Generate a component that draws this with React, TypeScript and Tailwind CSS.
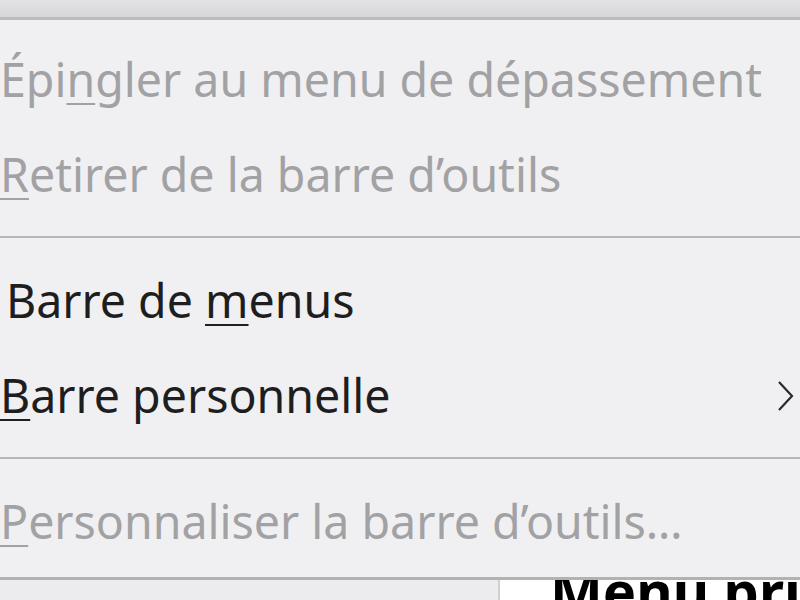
import React from 'react'

type Item = {
  before: string
  key: string
  after: string
  disabled?: boolean
  submenu?: boolean
  indent?: boolean
}

const groups: Item[][] = [
  [
    { before: 'Épi', key: 'n', after: 'gler au menu de dépassement', disabled: true },
    { before: '', key: 'R', after: 'etirer de la barre d’outils', disabled: true },
  ],
  [
    { before: 'Barre de ', key: 'm', after: 'enus', indent: true },
    { before: '', key: 'B', after: 'arre personnelle', submenu: true },
  ],
  [{ before: '', key: 'P', after: 'ersonnaliser la barre d’outils…', disabled: true }],
]

function MenuRow({ item }: { item: Item }) {
  return (
    <div
      className={`flex items-center h-[95px] leading-[95px] whitespace-nowrap ${
        item.disabled ? 'text-[#a2a2a4]' : 'text-[#1e1e20]'
      } ${item.indent ? 'pl-[6px]' : 'pl-0'}`}
    >
      <span className="flex-1">
        {item.before}
        <span className="underline decoration-2 underline-offset-[6px]">{item.key}</span>
        {item.after}
      </span>
      {item.submenu && (
        <svg width="22" height="34" viewBox="0 0 22 34" fill="none" stroke="#2a2a2c" strokeWidth="2.2" className="mr-[4px]">
          <polyline points="5 3 18 17 5 31" />
        </svg>
      )}
    </div>
  )
}

export default function App() {
  return (
    <div
      className="w-[800px] h-[600px] overflow-hidden flex flex-col bg-[#f0f0f2] text-[46.5px]"
      style={{ fontFamily: '"Noto Sans", "Open Sans", sans-serif' }}
    >
      <div className="h-[20px] shrink-0 bg-gradient-to-b from-[#e3e3e5] to-[#d6d6d8] border-b-[3px] border-[#bcbcbe]" />

      <div className="flex flex-col pt-[12px] pb-[8px] bg-[#f0f0f2]">
        {groups.map((g, gi) => (
          <div key={gi}>
            {gi > 0 && <div className="h-[2px] bg-[#b6b6b8] mt-[14px] mb-[15px]" />}
            {g.map((item, i) => (
              <MenuRow key={i} item={item} />
            ))}
          </div>
        ))}
      </div>

      <div className="h-[3px] shrink-0 bg-[#b2b2b4]" />

      <div className="flex flex-1 overflow-hidden">
        <div className="w-[500px] shrink-0 bg-[#ececee] border-r-2 border-[#d0d0d2]" />
        <div className="flex-1 min-w-0 bg-white pl-[50px]">
          <div className="text-[56px] leading-none font-bold text-black -mt-[18px] whitespace-nowrap">Menu principal</div>
        </div>
      </div>
    </div>
  )
}
